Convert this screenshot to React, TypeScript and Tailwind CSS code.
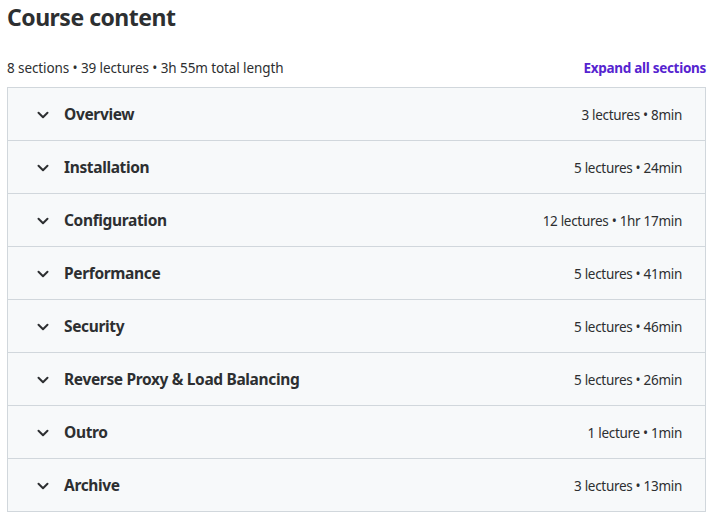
import React from "react";

const sections = [
  { title: "Overview", meta: "3 lectures • 8min" },
  { title: "Installation", meta: "5 lectures • 24min" },
  { title: "Configuration", meta: "12 lectures • 1hr 17min" },
  { title: "Performance", meta: "5 lectures • 41min" },
  { title: "Security", meta: "5 lectures • 46min" },
  { title: "Reverse Proxy & Load Balancing", meta: "5 lectures • 26min" },
  { title: "Outro", meta: "1 lecture • 1min" },
  { title: "Archive", meta: "3 lectures • 13min" },
];

function Chevron() {
  return (
    <svg width="12" height="8" viewBox="0 0 12 8" fill="none" className="shrink-0">
      <path d="M1.5 1.8 6 6.2l4.5-4.4" stroke="#2d2f31" strokeWidth="2" strokeLinecap="round" strokeLinejoin="round" />
    </svg>
  );
}

export default function App() {
  return (
    <div
      className="bg-white px-[7px] pt-[3px] text-[#2d2f31]"
      style={{ fontFamily: '"Noto Sans", "Open Sans", sans-serif' }}
    >
      <h2 className="text-[23px] font-bold leading-[29px] tracking-[-0.5px]">Course content</h2>
      <div className="mt-[26px] flex items-center justify-between">
        <span className="text-[13.5px] leading-[20px] tracking-[-0.1px]">8 sections • 39 lectures • 3h 55m total length</span>
        <button className="text-[13.5px] font-bold leading-[20px] tracking-[-0.3px] text-[#5624d0]">Expand all sections</button>
      </div>
      <div className="mt-[9px] border border-[#d1d7dc] bg-[#f7f9fa]">
        {sections.map((s, i) => (
          <div
            key={s.title}
            className={
              i > 0
                ? "flex h-[53px] items-center border-t border-[#d1d7dc] pl-[29px] pr-[23px] pt-[2px]"
                : "flex h-[52px] items-center pl-[29px] pr-[23px] pt-[2px]"
            }
          >
            <Chevron />
            <span className="ml-[15px] text-[15.5px] font-bold tracking-[-0.35px]">{s.title}</span>
            <span className="ml-auto text-[13.5px] tracking-[-0.3px]">{s.meta}</span>
          </div>
        ))}
      </div>
    </div>
  );
}
